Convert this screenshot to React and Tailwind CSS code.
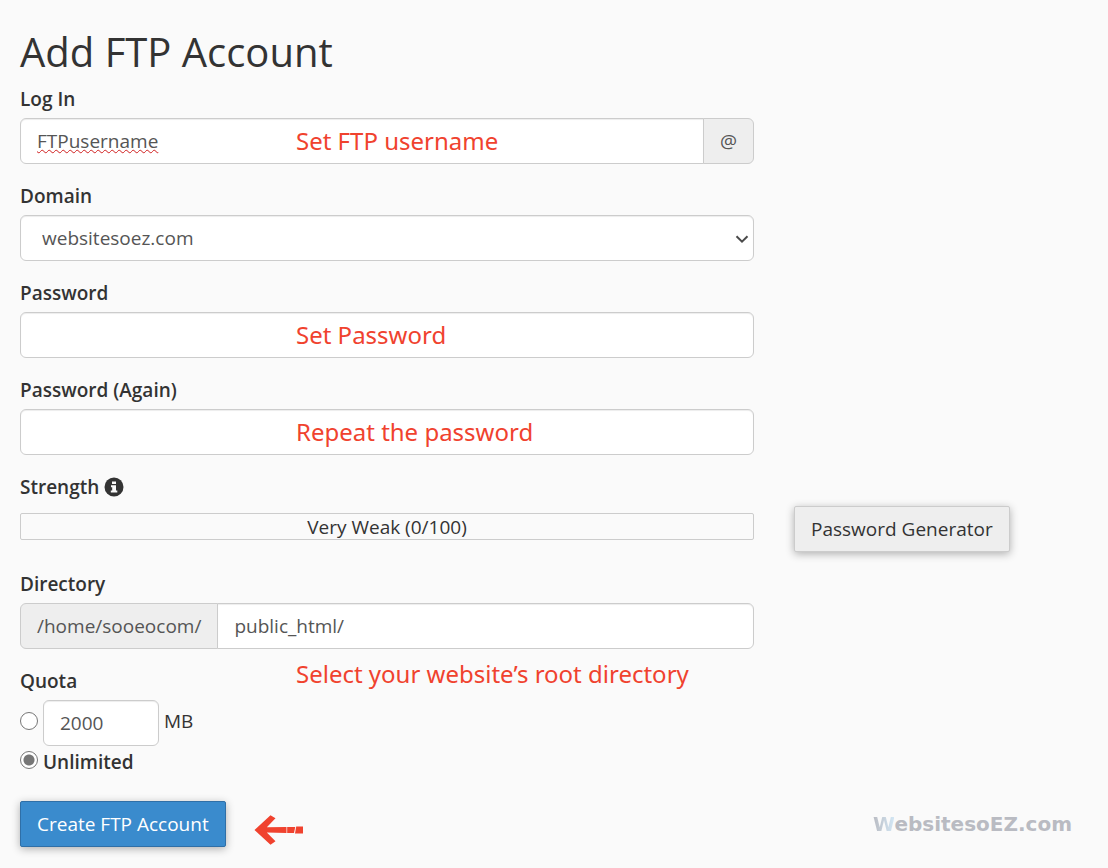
import React, { useState } from 'react';

const inputClass =
  'block h-[46px] w-full rounded-md border border-[#cccccc] bg-white px-4 text-[19px] text-[#555555] shadow-[inset_0_1px_1px_rgba(0,0,0,0.075)] focus:outline-none';
const labelClass = 'block text-[19px] leading-[26px] font-semibold text-[#333333]';
const addonClass =
  'flex items-center border border-[#cccccc] bg-[#eeeeee] px-4 text-[19px] text-[#555555]';
const radioClass =
  'mb-1 h-[18px] w-[18px] shrink-0 appearance-none rounded-full border border-[#767676] bg-white checked:bg-[radial-gradient(circle,#767676_5px,#ffffff_6px)]';

const Note = ({ children }) => (
  <span className="pointer-events-none absolute inset-y-0 left-[276px] flex items-center font-['Noto_Sans',sans-serif] text-2xl whitespace-nowrap text-[#f0422e]">
    {children}
  </span>
);

const InfoIcon = () => (
  <svg viewBox="0 0 20 20" className="h-5 w-5" aria-hidden="true">
    <circle cx="10" cy="10" r="9.5" fill="#333333" />
    <path d="M8 4.5h4v2.600H8zM7 8.300h5v5.200h1.300v2H6.800v-2H8.200v-3.200H7z" fill="#fafafa" />
  </svg>
);

const ArrowLeft = () => (
  <svg viewBox="0 0 50 30" className="h-[30px] w-[50px]" aria-hidden="true">
    <g fill="#f0422e">
      <path d="M0.5 15 16.5 0.300 21.500 3.200 12.800 12.300 32.500 12v6L12.800 17.600 21.500 26.300 16.500 29.700z" />
      <path d="M33.200 12h8l-1.200 6h-6.800z" />
      <path d="M42.200 11.600h6.800v7h-8z" />
    </g>
  </svg>
);

const App = () => {
  const [username, setUsername] = useState('FTPusername');
  const [domain, setDomain] = useState('websitesoez.com');
  const [password, setPassword] = useState('');
  const [confirm, setConfirm] = useState('');
  const [directory, setDirectory] = useState('public_html/');
  const [quota, setQuota] = useState('2000');
  const [quotaType, setQuotaType] = useState('unlimited');

  return (
    <div className="min-h-screen bg-[#fafafa] px-5 pt-[29px] pb-5 font-['Open_Sans',sans-serif] text-[19px] text-[#333333]">
      <h1 className="mb-3 text-[40px] leading-[45px] font-normal">Add FTP Account</h1>

      <form onSubmit={(e) => e.preventDefault()}>
        <div className="flex max-w-[734px] flex-col gap-[19px]">
          <div>
            <label htmlFor="login" className={labelClass}>Log In</label>
            <div className="relative mt-1.5 flex">
              <input id="login" type="text" spellCheck={false} value={username} onChange={(e) => setUsername(e.target.value)} className={`${inputClass} min-w-0 flex-1 rounded-r-none underline decoration-[#d01f1f] decoration-wavy decoration-[1px] underline-offset-1`} />
              <span className={`${addonClass} -ml-px rounded-r-md`}>@</span>
              <Note>Set FTP username</Note>
            </div>
          </div>

          <div>
            <label htmlFor="domain" className={labelClass}>Domain</label>
            <div className="relative mt-1.5">
              <select id="domain" value={domain} onChange={(e) => setDomain(e.target.value)} className={`${inputClass} appearance-none pl-[21px]`}>
                <option>websitesoez.com</option>
              </select>
              <svg viewBox="0 0 14 8" className="pointer-events-none absolute top-5 right-[5px] h-2 w-3.5" fill="none" stroke="#4a4a4a" strokeWidth="2" aria-hidden="true">
                <path d="M1.500 1.200 7 6.600l5.500-5.400" />
              </svg>
            </div>
          </div>

          <div>
            <label htmlFor="password" className={labelClass}>Password</label>
            <div className="relative mt-1.5">
              <input id="password" type="password" value={password} onChange={(e) => setPassword(e.target.value)} className={inputClass} />
              <Note>Set Password</Note>
            </div>
          </div>

          <div>
            <label htmlFor="confirm" className={labelClass}>Password (Again)</label>
            <div className="relative mt-1.5">
              <input id="confirm" type="password" value={confirm} onChange={(e) => setConfirm(e.target.value)} className={inputClass} />
              <Note>Repeat the password</Note>
            </div>
          </div>
        </div>

        {/* strength meter and generator */}
        <div className="mt-[19px] flex items-end gap-10">
          <div className="w-full max-w-[734px] pb-3">
            <div className="flex items-center gap-[5px]">
              <span className={labelClass}>Strength</span>
              <InfoIcon />
            </div>
            <div className="mt-[13px] flex h-[27px] items-center justify-center rounded-xs border border-[#cccccc] leading-6">Very Weak (0/100)</div>
          </div>
          <button type="button" className="h-[46px] shrink-0 rounded-xs border border-[#cccccc] bg-[#eeeeee] px-4 whitespace-nowrap shadow-[0_2px_8px_rgba(0,0,0,0.3)]">Password Generator</button>
        </div>

        <div className="mt-[19px] max-w-[734px]">
          <label htmlFor="directory" className={labelClass}>Directory</label>
          <div className="mt-1.5 flex">
            <span className={`${addonClass} rounded-l-md`}>/home/sooeocom/</span>
            <input id="directory" type="text" spellCheck={false} value={directory} onChange={(e) => setDirectory(e.target.value)} className={`${inputClass} -ml-px min-w-0 flex-1 rounded-l-none`} />
          </div>
        </div>

        <div role="group" aria-labelledby="quota-label" className="relative mt-[19px]">
          <div id="quota-label" className={labelClass}>Quota</div>
          <span className="absolute -top-3 left-[276px] font-['Noto_Sans',sans-serif] text-2xl leading-9 whitespace-nowrap text-[#f0422e]">Select your website’s root directory</span>
          <div className="mt-1.5 flex items-center gap-[5px]">
            <input type="radio" name="quota" aria-label="Limited quota" checked={quotaType === 'limited'} onChange={() => setQuotaType('limited')} className={radioClass} />
            <input id="size" type="text" value={quota} onChange={(e) => setQuota(e.target.value)} className={`${inputClass} max-w-[116px]`} />
            <label htmlFor="size" className="mb-1">MB</label>
          </div>
          <label className="flex items-center gap-[5px] pt-[3px] leading-[26px] font-semibold">
            <input type="radio" name="quota" checked={quotaType === 'unlimited'} onChange={() => setQuotaType('unlimited')} className={radioClass} />
            Unlimited
          </label>
        </div>

        <div className="mt-[26px] flex items-center">
          <button type="submit" className="h-[46px] rounded-xs border border-[#2f6fa7] bg-[#3a8bcd] px-4 whitespace-nowrap text-white shadow-[0_2px_8px_rgba(0,0,0,0.3)]">Create FTP Account</button>
          <div className="ml-7 pt-3">
            <ArrowLeft />
          </div>
          <div className="mr-4 ml-auto font-['DejaVu_Sans',sans-serif] text-xl font-bold text-[#b9bbc2]">
            <span className="bg-linear-to-r from-[#b9bbc2] to-[#d3e7f5] bg-clip-text text-transparent">W</span>ebsitesoEZ.com
          </div>
        </div>
      </form>
    </div>
  );
};

export default App;
